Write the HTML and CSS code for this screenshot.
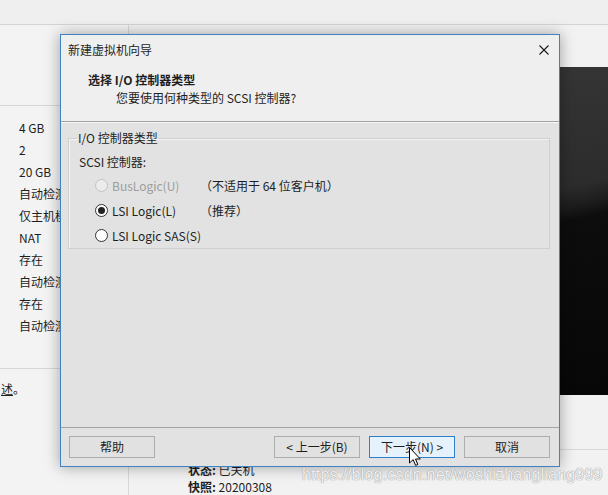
FILE: index.html
```html
<!DOCTYPE html>
<html lang="zh-CN">
<head>
<meta charset="utf-8">
<title>新建虚拟机向导</title>
<link rel="stylesheet" href="styles.css">
</head>
<body>
<div class="screen">
  <div class="topbar"></div>
  <div class="main">
    <aside class="left">
      <div class="left-head"></div>
      <ul class="specs">
        <li>4 GB</li>
        <li>2</li>
        <li>20 GB</li>
        <li>自动检测</li>
        <li>仅主机模式</li>
        <li>NAT</li>
        <li>存在</li>
        <li>自动检测</li>
        <li>存在</li>
        <li>自动检测</li>
      </ul>
      <div class="left-note"><span class="link">述</span>。</div>
    </aside>
    <section class="right">
      <div class="preview"></div>
      <div class="right-sep"></div>
      <div class="status">
        <div><b>状态:</b> 已关机</div>
        <div><b>快照:</b> 20200308</div>
      </div>
    </section>
  </div>
</div>

<div class="dialog">
  <div class="titlebar">
    <span class="title">新建虚拟机向导</span>
    <svg class="close" width="10" height="10" viewBox="0 0 10 10"><path d="M0.5 0.5 L9.5 9.5 M9.5 0.5 L0.5 9.5" stroke="#1a1a1a" stroke-width="1.1" fill="none"/></svg>
  </div>
  <div class="wiz-head">
    <div class="wiz-title">选择 I/O 控制器类型</div>
    <div class="wiz-sub">您要使用何种类型的 SCSI 控制器?</div>
  </div>
  <div class="wiz-body">
    <fieldset class="group">
      <legend>I/O 控制器类型</legend>
      <div class="scsi">SCSI 控制器:</div>
      <div class="opt disabled"><span class="radio"></span><span class="opt-label">BusLogic(U)</span><span class="note">（不适用于 64 位客户机）</span></div>
      <div class="opt"><span class="radio checked"></span><span class="opt-label">LSI Logic(L)</span><span class="note">（推荐）</span></div>
      <div class="opt"><span class="radio"></span><span class="opt-label">LSI Logic SAS(S)</span></div>
    </fieldset>
  </div>
  <div class="wiz-foot">
    <button class="btn help">帮助</button>
    <button class="btn">&lt; 上一步(B)</button>
    <button class="btn default">下一步(N) &gt;</button>
    <button class="btn">取消</button>
  </div>
</div>

<div class="watermark">https://blog.csdn.net/woshizhangliang999</div>

<svg class="cursor" width="13" height="20" viewBox="0 0 13 20"><path d="M0.5 0.5 L0.5 16 L4.2 12.6 L6.6 18.4 L8.8 17.5 L6.5 12 L11.3 12 Z" fill="#fff" stroke="#000" stroke-width="1" stroke-linejoin="round"/></svg>
</body>
</html>
```

FILE: styles.css
```css
html, body {
  margin: 0;
  padding: 0;
}
body {
  width: 608px;
  height: 495px;
  overflow: hidden;
  position: relative;
  background: #f1f1f1;
  font-family: "Noto Sans CJK SC", "Noto Sans", sans-serif;
  font-size: 12px;
  color: #1e1e1e;
}
.screen {
  display: flex;
  flex-direction: column;
  height: 495px;
}
.topbar {
  height: 25px;
  box-sizing: border-box;
  border-bottom: 1px solid #d4d4d4;
  background: #efefef;
}
.main {
  flex: 1;
  display: flex;
}
.left {
  width: 129px;
  box-sizing: border-box;
  border-right: 1px solid #d8d8d8;
  background: #f3f3f3;
}
.left-head {
  height: 81px;
  box-sizing: border-box;
  border-bottom: 1px solid #d6d6d6;
}
.specs {
  list-style: none;
  margin: 0;
  padding: 11px 0 0 19px;
}
.specs li {
  line-height: 22px;
  height: 22px;
  white-space: nowrap;
}
.left-note {
  margin-top: 31px;
  border-top: 1px solid #d6d6d6;
  padding-top: 10px;
  line-height: 20px;
  padding-left: 1px;
}
.link {
  text-decoration: underline;
}
.right {
  flex: 1;
  display: flex;
  flex-direction: column;
  background: #f2f2f2;
}
.preview {
  margin: 42px 0 0 430px;
  height: 328px;
  background: linear-gradient(168deg, #353535 0%, #2c2c2c 36%, #1c1c1c 42%, #0d0d0e 46%, #070708 100%);
}
.right-sep {
  height: 55px;
  box-sizing: border-box;
  border-bottom: 1px solid #dadada;
}
.status {
  padding: 11px 0 0 59px;
  line-height: 17px;
}
.status b {
  font-weight: 700;
}

/* dialog window */
.dialog {
  position: absolute;
  left: 60px;
  top: 34px;
  width: 500px;
  height: 433px;
  box-sizing: border-box;
  border: 1px solid #3f83c3;
  background: #e2e2e2;
  box-shadow: 0 0 14px rgba(0, 0, 0, 0.35);
  display: flex;
  flex-direction: column;
}
.titlebar {
  height: 29px;
  flex: none;
  display: flex;
  align-items: center;
  justify-content: space-between;
  padding: 0 10px 0 7px;
  background: #efefef;
}
.title {
  line-height: 16px;
}
.close {
  display: block;
}
.wiz-head {
  height: 58px;
  flex: none;
  box-sizing: border-box;
  padding: 7px 0 0 27px;
  background: #efefef;
  border-bottom: 1px solid #a2a2a2;
}
.wiz-title {
  font-weight: 700;
  line-height: 18px;
}
.wiz-sub {
  padding-left: 28px;
  line-height: 18px;
}
.wiz-body {
  flex: 1;
  padding: 7px 9px 0 7px;
  border-top: 1px solid #f7f7f7;
}
.group {
  margin: 0;
  padding: 7px 10px 0 8px;
  border: 1px solid #cfcfcf;
  box-shadow: inset 1px 1px 0 #f3f3f3;
  min-width: 0;
}
.group legend {
  padding: 0 1px;
  line-height: 16px;
}
.scsi {
  padding-left: 2px;
  line-height: 18px;
  margin-bottom: 2px;
}
.opt {
  display: flex;
  align-items: center;
  height: 25px;
  padding-left: 18px;
}
.radio {
  width: 13px;
  height: 13px;
  box-sizing: border-box;
  border: 1px solid #333;
  border-radius: 50%;
  background: #fff;
  flex: none;
  display: flex;
  align-items: center;
  justify-content: center;
}
.radio.checked::after {
  content: "";
  width: 7px;
  height: 7px;
  border-radius: 50%;
  background: #222;
}
.opt-label {
  margin-left: 4px;
  width: 91px;
  white-space: nowrap;
}
.note {
  white-space: nowrap;
  margin-left: -3px;
}
.disabled .radio {
  border-color: #c2c2c2;
  background: #ececec;
}
.disabled .opt-label {
  color: #9d9d9d;
}
.wiz-foot {
  height: 39px;
  flex: none;
  box-sizing: border-box;
  border-top: 1px solid #a2a2a2;
  display: flex;
  gap: 9px;
  padding: 8px 9px 0 8px;
}
.btn {
  width: 86px;
  height: 22px;
  box-sizing: border-box;
  border: 1px solid #adadad;
  background: #e1e1e1;
  font-family: inherit;
  font-size: 12px;
  color: #1e1e1e;
  padding: 0;
  line-height: 20px;
}
.btn.help {
  margin-right: auto;
}
.btn.default {
  border-color: #2e7fd0;
  background: #e5f1fb;
}

.watermark {
  position: absolute;
  left: 302px;
  top: 465px;
  font-family: "Liberation Sans", sans-serif;
  font-size: 16px;
  letter-spacing: 0.2px;
  line-height: 20px;
  color: rgba(255, 255, 255, 0.85);
  text-shadow: 0 0 1px #9a9a9a, 0 0 1px #9a9a9a;
  white-space: nowrap;
}
.cursor {
  position: absolute;
  left: 409px;
  top: 447px;
}
```
